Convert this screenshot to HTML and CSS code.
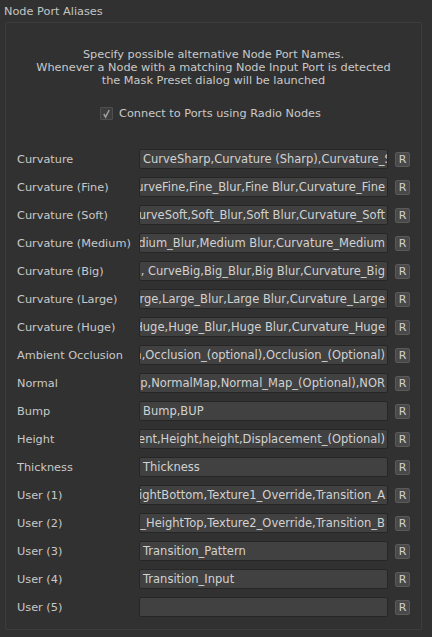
FILE: index.html
```html
<!DOCTYPE html>
<html>
<head>
<meta charset="utf-8">
<link rel="stylesheet" href="styles.css">
</head>
<body>
<div class="title">Node Port Aliases</div>
<div class="group">
  <div class="desc">
    <div>Specify possible alternative Node Port Names.</div>
    <div>Whenever a Node with a matching Node Input Port is detected</div>
    <div>the Mask Preset dialog will be launched</div>
  </div>
  <label class="check-row">
    <span class="checkbox"><svg viewBox="0 0 11 11" width="11" height="11"><path d="M2.8 6 L4.6 9 L8.2 2" fill="none" stroke="#9c9c9c" stroke-width="1.6"/></svg></span>
    <span>Connect to Ports using Radio Nodes</span>
  </label>
  <div class="rows">
    <div class="label">Curvature</div><div class="field"><span>CurveSharp,Curvature (Sharp),Curvature_Sharp</span></div><div class="rbtn">R</div>
    <div class="label">Curvature (Fine)</div><div class="field end"><span>CurvatureFine,CurveFine,Fine_Blur,Fine Blur,Curvature_Fine</span></div><div class="rbtn">R</div>
    <div class="label">Curvature (Soft)</div><div class="field end"><span>CurvatureSoft,CurveSoft,Soft_Blur,Soft Blur,Curvature_Soft</span></div><div class="rbtn">R</div>
    <div class="label">Curvature (Medium)</div><div class="field end"><span>CurveMedium,Medium_Blur,Medium Blur,Curvature_Medium</span></div><div class="rbtn">R</div>
    <div class="label">Curvature (Big)</div><div class="field end"><span>CurvatureBig, CurveBig,Big_Blur,Big Blur,Curvature_Big</span></div><div class="rbtn">R</div>
    <div class="label">Curvature (Large)</div><div class="field end"><span>CurveLarge,Large_Blur,Large Blur,Curvature_Large</span></div><div class="rbtn">R</div>
    <div class="label">Curvature (Huge)</div><div class="field end"><span>CurvatureHuge,Huge_Blur,Huge Blur,Curvature_Huge</span></div><div class="rbtn">R</div>
    <div class="label">Ambient Occlusion</div><div class="field end"><span>AO,AmbientOcclusion,Occlusion_(optional),Occlusion_(Optional)</span></div><div class="rbtn">R</div>
    <div class="label">Normal</div><div class="field end"><span>Normal,Normal_Map,NormalMap,Normal_Map_(Optional),NOR</span></div><div class="rbtn">R</div>
    <div class="label">Bump</div><div class="field"><span>Bump,BUP</span></div><div class="rbtn">R</div>
    <div class="label">Height</div><div class="field end"><span>Displacement,Height,height,Displacement_(Optional)</span></div><div class="rbtn">R</div>
    <div class="label">Thickness</div><div class="field"><span>Thickness</span></div><div class="rbtn">R</div>
    <div class="label">User (1)</div><div class="field end"><span>Texture1_HeightBottom,Texture1_Override,Transition_A</span></div><div class="rbtn">R</div>
    <div class="label">User (2)</div><div class="field end"><span>Texture2_HeightTop,Texture2_Override,Transition_B</span></div><div class="rbtn">R</div>
    <div class="label">User (3)</div><div class="field"><span>Transition_Pattern</span></div><div class="rbtn">R</div>
    <div class="label">User (4)</div><div class="field"><span>Transition_Input</span></div><div class="rbtn">R</div>
    <div class="label">User (5)</div><div class="field"><span></span></div><div class="rbtn">R</div>
  </div>
</div>
</body>
</html>
```
FILE: styles.css
```css
html, body {
  margin: 0;
  padding: 0;
  background: #313131;
}
body {
  width: 432px;
  height: 637px;
  overflow: hidden;
  font-family: "DejaVu Sans", Verdana, sans-serif;
  font-size: 11.3px;
  color: #c9c9c9;
}
.title {
  height: 20px;
  padding-top: 2px;
  line-height: 20px;
  padding-left: 4px;
  color: #c4c4c4;
}
.group {
  margin-left: 5px;
  width: 415px;
  height: 606px;
  border: 1px solid #3d3d3d;
  border-radius: 2px;
}
.desc {
  margin-top: 25px;
  text-align: center;
  line-height: 13px;
}
.check-row {
  display: flex;
  align-items: center;
  justify-content: center;
  gap: 6px;
  margin-top: 18px;
  height: 16px;
  margin-right: 6px;
}
.checkbox {
  width: 11px;
  height: 11px;
  border: 1px solid #4f4f4f;
  background: #3d3d3d;
  border-radius: 1px;
  display: flex;
}
.checkbox svg {
  width: 11px;
  height: 11px;
}
.rows {
  display: grid;
  grid-template-columns: 115px 249px 15px;
  column-gap: 7px;
  grid-auto-rows: 28px;
  align-items: center;
  margin-top: 24px;
  padding: 0 11px;
}
.label {
  white-space: nowrap;
}
.field {
  height: 18px;
  border: 1px solid #262626;
  border-radius: 2px;
  background: #414141;
  display: flex;
  align-items: center;
  overflow: hidden;
  padding: 0 1px 0 3px;
  white-space: nowrap;
  color: #d2d2d2;
  font-size: 11.5px;
}
.field.end {
  justify-content: flex-end;
  padding: 0 2px 0 0;
}
.field span {
  flex: none;
}
.rbtn {
  width: 13px;
  height: 13px;
  border: 1px solid #5a5a5a;
  border-radius: 2px;
  background: #494949;
  color: #d2d2d2;
  font-size: 11px;
  line-height: 13px;
  text-align: center;
}
```
